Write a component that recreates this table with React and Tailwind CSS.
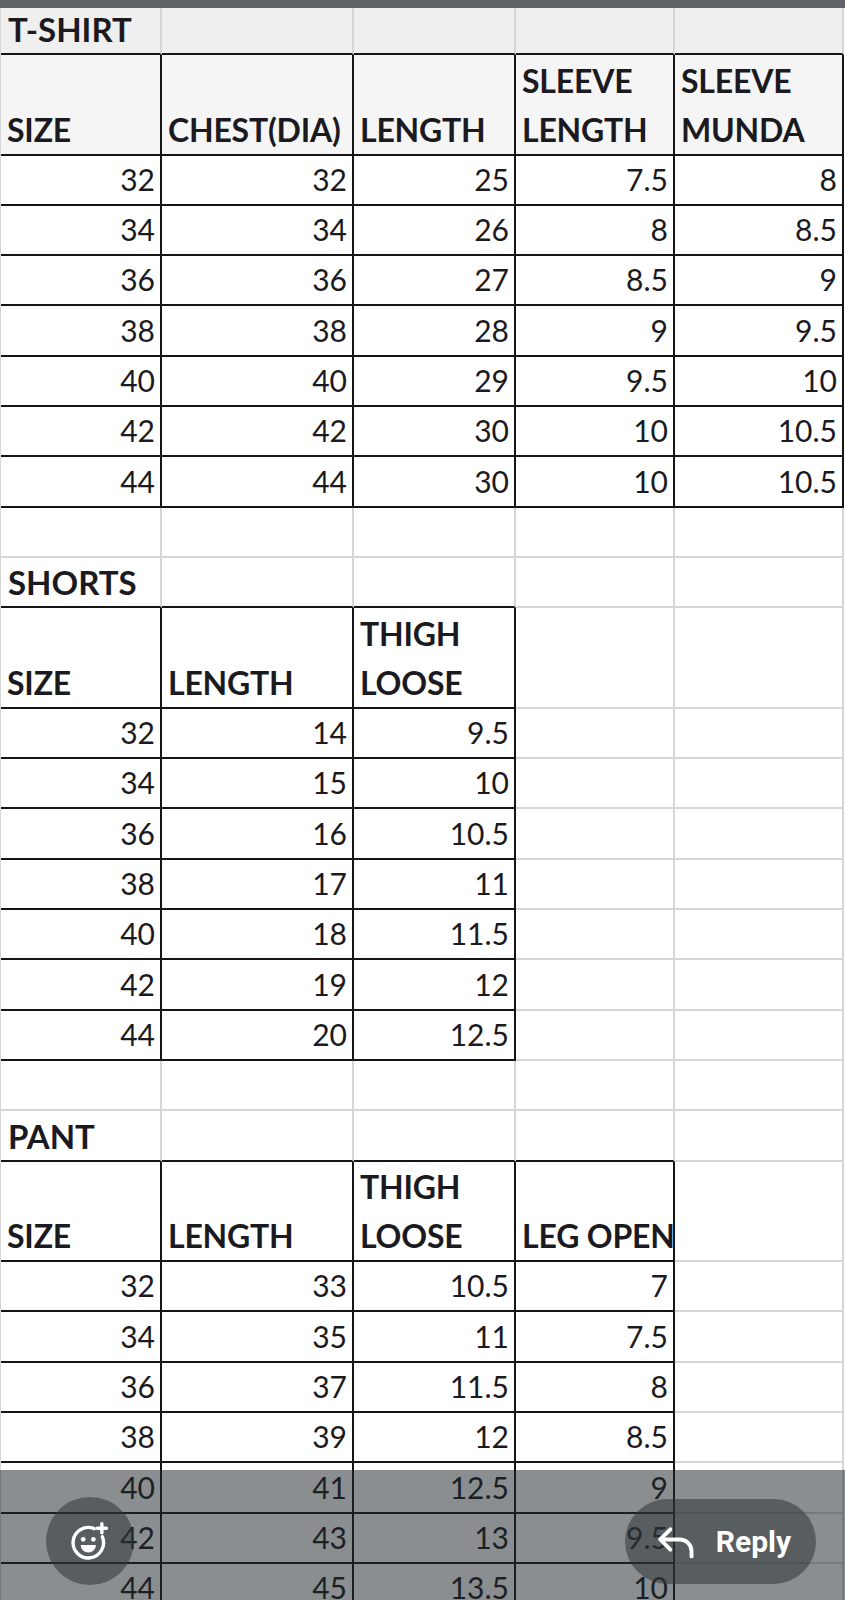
const COLS = 5;

const sections = [
  {
    title: "T-SHIRT",
    first: true,
    headers: [["SIZE"], ["CHEST(DIA)"], ["LENGTH"], ["SLEEVE", "LENGTH"], ["SLEEVE", "MUNDA"]],
    rows: [
      ["32", "32", "25", "7.5", "8"],
      ["34", "34", "26", "8", "8.5"],
      ["36", "36", "27", "8.5", "9"],
      ["38", "38", "28", "9", "9.5"],
      ["40", "40", "29", "9.5", "10"],
      ["42", "42", "30", "10", "10.5"],
      ["44", "44", "30", "10", "10.5"],
    ],
  },
  {
    title: "SHORTS",
    headers: [["SIZE"], ["LENGTH"], ["THIGH", "LOOSE"]],
    rows: [
      ["32", "14", "9.5"],
      ["34", "15", "10"],
      ["36", "16", "10.5"],
      ["38", "17", "11"],
      ["40", "18", "11.5"],
      ["42", "19", "12"],
      ["44", "20", "12.5"],
    ],
  },
  {
    title: "PANT",
    headers: [["SIZE"], ["LENGTH"], ["THIGH", "LOOSE"], ["LEG OPEN"]],
    rows: [
      ["32", "33", "10.5", "7"],
      ["34", "35", "11", "7.5"],
      ["36", "37", "11.5", "8"],
      ["38", "39", "12", "8.5"],
      ["40", "41", "12.5", "9"],
      ["42", "43", "13", "9.5"],
      ["44", "45", "13.5", "10"],
    ],
  },
];

function Cell({ right, bottom, className = "", children }) {
  return (
    <div
      className={`flex items-end overflow-visible whitespace-nowrap border-r-2 border-b-2 ${
        right ? "border-r-[#151515]" : "border-r-[#d6d6d6]"
      } ${bottom ? "border-b-[#151515]" : "border-b-[#d6d6d6]"} ${className}`}
    >
      {children}
    </div>
  );
}

function Section({ s, last }) {
  const n = s.headers.length;
  const cols = Array.from({ length: COLS }, (_, i) => i);
  return (
    <>
      {/* title row */}
      {cols.map((i) => (
        <Cell
          key={"t" + i}
          bottom={i < n}
          className={`${s.first ? "h-[47px] bg-[#efefef]" : "h-[50.3px]"} pl-[7px] text-[33px] font-bold`}
        >
          {i === 0 ? <span className="leading-[48px]">{s.title}</span> : null}
        </Cell>
      ))}
      {/* header row */}
      {cols.map((i) => (
        <Cell
          key={"h" + i}
          right={i < n}
          bottom={i < n}
          className={`h-[100.6px] pl-[6px] text-[32px] font-bold tracking-[-0.2px] ${s.first ? "bg-[#f5f5f5]" : ""}`}
        >
          {i < n ? (
            <div className="flex flex-col leading-[49px]">
              {s.headers[i].map((l) => (
                <span key={l}>{l}</span>
              ))}
            </div>
          ) : null}
        </Cell>
      ))}
      {/* data rows */}
      {s.rows.map((r, ri) =>
        cols.map((i) => (
          <Cell
            key={"d" + ri + "-" + i}
            right={i < n}
            bottom={i < n}
            className="h-[50.3px] justify-end pr-[5px]"
          >
            {i < n ? <span className="leading-[49px]">{r[i]}</span> : null}
          </Cell>
        ))
      )}
      {/* spacer row */}
      {!last && cols.map((i) => <Cell key={"e" + i} className="h-[50.3px]" />)}
    </>
  );
}

function EmojiIcon() {
  return (
    <svg width="44" height="44" viewBox="-1 -1 26 26" fill="none">
      <path d="M14.5 4.7A9 9 0 1 0 19.3 9.5" stroke="white" strokeWidth="2" strokeLinecap="round" />
      <path d="M19 1.8v5.4M16.3 4.5h5.4" stroke="white" strokeWidth="2" strokeLinecap="round" />
      <circle cx="8" cy="11" r="1.4" fill="white" />
      <circle cx="14" cy="11" r="1.4" fill="white" />
      <path d="M6.5 14.3h9a4.5 4.5 0 0 1 -9 0z" fill="white" />
    </svg>
  );
}

function ReplyIcon() {
  return (
    <svg width="44" height="34" viewBox="0 0 26 20" fill="none">
      <path
        d="M8.5 2.5L2.5 8.5L8.5 14.5M2.5 8.5H14a7 7 0 0 1 7 7v3"
        stroke="white"
        strokeWidth="2.3"
        strokeLinecap="round"
        strokeLinejoin="round"
      />
    </svg>
  );
}

export default function App() {
  return (
    <div className="relative h-[1600px] w-[845px] overflow-hidden bg-white text-[30px] text-[#1b1a20] font-['Lato',sans-serif]">
      <div className="h-[8px] bg-[#5f6368]" />
      <div className="grid w-[845px] grid-cols-[161px_192px_162px_159px_169px] border-l border-l-[#d6d6d6]">
        {sections.map((s, k) => (
          <Section key={s.title} s={s} last={k === sections.length - 1} />
        ))}
      </div>

      <div className="absolute inset-x-0 bottom-0 h-[130px] bg-[#1e262a]/[0.52]">
        <div className="absolute left-[46px] bottom-[15px] flex h-[88px] w-[88px] items-center justify-center rounded-full bg-[#2f3438]/55">
          <EmojiIcon />
        </div>
        <div className="absolute left-[625px] bottom-[16px] flex h-[85px] w-[191px] items-center justify-center gap-[16px] rounded-full bg-[#2f3438]/55 pl-[6px]">
          <ReplyIcon />
          <span className="font-['Roboto',sans-serif] text-[30px] font-bold text-white">Reply</span>
        </div>
      </div>
    </div>
  );
}
